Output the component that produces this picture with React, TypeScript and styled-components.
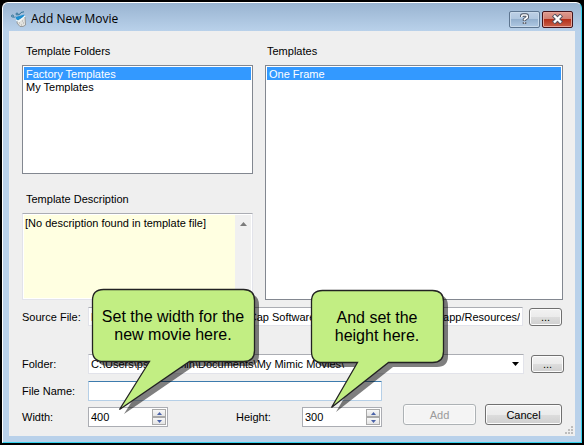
import React, { useState } from "react";
import styled, { createGlobalStyle } from "styled-components";

const GlobalStyle = createGlobalStyle`
  *, *::before, *::after { box-sizing: border-box; }
  body { margin: 0; background: #000; }
  button, input, select, textarea { font: inherit; color: inherit; margin: 0; border-radius: 0; }
  h1, h2, ul { margin: 0; padding: 0; font: inherit; }
`;

const Dialog = styled.form`
  margin: 2px;
  padding: 0 6px 6px;
  border: 1px solid #fff;
  border-right-color: #35d3ee;
  border-bottom-color: #35d3ee;
  border-radius: 6px 6px 0 0;
  background: linear-gradient(#99b4d1 0, #b9d1ea 28px, #b9d1ea 100%);
  font: 11px/14px "Liberation Sans", Arial, sans-serif;
  color: #000;
`;

const TitleBar = styled.header`
  display: flex;
  align-items: center;
  gap: 4px;
  height: 28px;
  padding: 4px 2px 0;
`;

const Title = styled.h1`
  flex: 1;
  font: 12px/16px "Open Sans", "Noto Sans", sans-serif;
`;

const CaptionButtons = styled.div`
  display: flex;
  gap: 2px;
`;

const CaptionButton = styled.button<{ $danger?: boolean }>`
  display: grid;
  place-items: center;
  width: 31px;
  height: 17px;
  padding: 0;
  border: 1px solid ${(p) => (p.$danger ? "#43141c" : "#5d7590")};
  border-radius: 2px;
  box-shadow: inset 0 0 0 1px ${(p) => (p.$danger ? "#e6a398" : "#c9daeb")};
  background: ${(p) =>
    p.$danger
      ? "linear-gradient(#dd9a8f 0, #d07f72 50%, #b5301a 50%, #c8614a 100%)"
      : "linear-gradient(#bdd0e5 0, #afc6df 50%, #94b0ce 50%, #b0c9e3 100%)"};
`;

const Client = styled.main`
  position: relative;
  padding: 13px 11px 6px 13px;
  background: #efefef;
`;

const Panels = styled.div`
  display: grid;
  grid-template-columns: 231fr 298fr;
  gap: 12px;
  padding-right: 1px;
`;

const Column = styled.section`
  display: flex;
  flex-direction: column;
`;

const Caption = styled.h2<{ $inset: number }>`
  padding-left: ${(p) => p.$inset}px;
  margin-bottom: 7px;
`;

const ListBox = styled.ul<{ $grow?: boolean }>`
  flex: ${(p) => (p.$grow ? "1" : "none")};
  height: ${(p) => (p.$grow ? "auto" : "109px")};
  padding: 1px;
  border: 1px solid #828790;
  background: #fff;
  list-style: none;
`;

const Option = styled.li<{ $selected?: boolean }>`
  height: 13px;
  padding-left: 2px;
  line-height: 14px;
  color: ${(p) => (p.$selected ? "#fff" : "#000")};
  background: ${(p) => (p.$selected ? "#3399ff" : "transparent")};
`;

const DescriptionCaption = styled.label`
  padding-left: 4px;
  margin: 18px 0 7px;
`;

const DescriptionBox = styled.div`
  display: flex;
  height: 87px;
  padding: 1px;
  border: 1px solid #e2e3ea;
  border-top-color: #abadb3;
  background: #fff;
`;

const Description = styled.textarea`
  flex: 1;
  min-width: 0;
  padding: 1px 0 0 1px;
  border: 0;
  outline: 0;
  resize: none;
  overflow: hidden;
  background: #ffffe1;
`;

const ScrollTrack = styled.div`
  display: flex;
  flex-direction: column;
  justify-content: space-between;
  align-items: center;
  width: 16px;
  padding: 7px 0 3px;
  background: #f0f0f0;
`;

const FieldRow = styled.div<{ $top: number; $end?: number }>`
  display: flex;
  align-items: center;
  margin-top: ${(p) => p.$top}px;
  padding-right: ${(p) => p.$end ?? 2}px;
`;

const FieldLabel = styled.label<{ $indent?: number }>`
  flex: none;
  width: 66px;
  margin-left: ${(p) => p.$indent ?? 0}px;
`;

const TextField = styled.input<{ $active?: boolean }>`
  flex: 1;
  min-width: 0;
  height: 19px;
  padding: 0 2px;
  border: 1px solid ${(p) => (p.$active ? "#b5cfe7" : "#e2e3ea")};
  border-top-color: ${(p) => (p.$active ? "#3d7bad" : "#abadb3")};
  border-radius: ${(p) => (p.$active ? 1 : 0)}px;
  outline: 0;
  background: #fff;
`;

const NameField = styled(TextField)`
  flex: none;
  width: 294px;
  height: 20px;
`;

const Combo = styled.div`
  display: grid;
  flex: 1;
  min-width: 0;
  align-items: center;
  & > * { grid-area: 1 / 1; }
  & > svg { justify-self: end; margin-right: 5px; pointer-events: none; }
`;

const ComboSelect = styled.select`
  appearance: none;
  width: 100%;
  height: 20px;
  padding: 0 2px;
  border: 1px solid #e2e3ea;
  border-top-color: #abadb3;
  outline: 0;
  background: #fff;
`;

const PushButton = styled.button<{ $width: number; $height: number; $gap: number }>`
  flex: none;
  width: ${(p) => p.$width}px;
  height: ${(p) => p.$height}px;
  margin-left: ${(p) => p.$gap}px;
  padding: 0;
  border: 1px solid #707070;
  border-radius: 3px;
  box-shadow: inset 0 0 0 1px #fcfcfc;
  background: linear-gradient(#f2f2f2 0, #ebebeb 50%, #dddddd 50%, #cfcfcf 100%);
  &:disabled {
    border-color: #adb2b5;
    color: #9a9a9a;
    background: #f4f4f4;
  }
`;

const Spin = styled.div`
  position: relative;
  display: flex;
  flex: none;
  width: 80px;
  height: 20px;
  padding: 1px;
  border: 1px solid #abadb3;
  background: #fff;
`;

const SpinInput = styled.input`
  flex: 1;
  min-width: 0;
  padding: 0 0 1px 1px;
  border: 0;
  outline: 0;
  background: transparent;
  appearance: textfield;
  &::-webkit-inner-spin-button { appearance: none; margin: 0; }
`;

const SpinButtons = styled.div`
  display: grid;
  width: 14px;
  grid-template-rows: 1fr 1fr;
`;

const SpinButton = styled.button`
  display: grid;
  place-items: center;
  min-height: 0;
  padding: 0;
  border: 1px solid #a9a9a9;
  background: linear-gradient(#f8f8f8, #e4e4e4);
`;

const Actions = styled.div`
  display: flex;
  flex: 1;
  justify-content: flex-end;
  margin-bottom: 5px;
`;

const Grip = styled.svg`
  position: absolute;
  right: 2px;
  bottom: 2px;
`;

const Bubble = styled.aside<{ $left: number; $bottom: number; $width: number }>`
  position: absolute;
  z-index: 1;
  left: ${(p) => p.$left}px;
  bottom: ${(p) => p.$bottom}px;
  width: ${(p) => p.$width}px;
  height: 121px;
  padding: 19px 0 0;
  font: 16px/18px "Liberation Sans", Arial, sans-serif;
  text-align: center;
  pointer-events: none;
  & > svg { position: absolute; inset: 0; overflow: visible; }
  & > p { position: relative; margin: 0; white-space: pre-line; }
`;

function Callout(props: {
  left: number;
  bottom: number;
  width: number;
  tail: [number, number, number, number];
  text: string;
}) {
  const { left, bottom, width: w, tail, text } = props;
  const [from, to, tipX, tipY] = tail;
  const h = 72;
  const r = 11;
  const d =
    `M${r} 0H${w - r}Q${w} 0 ${w} ${r}V${h - r}Q${w} ${h} ${w - r} ${h}` +
    `H${to}L${tipX} ${tipY}L${from} ${h}H${r}Q0 ${h} 0 ${h - r}V${r}Q0 0 ${r} 0Z`;
  return (
    <Bubble $left={left} $bottom={bottom} $width={w}>
      <svg width={w} height="121" aria-hidden="true">
        <path d={d} transform="translate(5 5)" fill="#000" fillOpacity="0.5" />
        <path d={d} transform="translate(.5 .5)" fill="#c2ee83" stroke="#222" strokeWidth="1.3" />
      </svg>
      <p>{text}</p>
    </Bubble>
  );
}

function Arrow({ down, color, size = 5 }: { down?: boolean; color: string; size?: number }) {
  const h = Math.ceil(size / 2);
  return (
    <svg width={size} height={h} viewBox={`0 0 ${size} ${h}`} aria-hidden="true">
      <path d={down ? `M0 0H${size}L${size / 2} ${h}Z` : `M0 ${h}H${size}L${size / 2} 0Z`} fill={color} />
    </svg>
  );
}

function Stepper(props: { id: string; initial: number; children: React.ReactNode }) {
  const [value, setValue] = useState(props.initial);
  return (
    <Spin>
      <SpinInput id={props.id} type="number" value={value} onChange={(e) => setValue(Number(e.target.value))} />
      <SpinButtons>
        <SpinButton type="button" aria-label="Increase" onClick={() => setValue(value + 1)}>
          <Arrow color="#4a62a8" />
        </SpinButton>
        <SpinButton type="button" aria-label="Decrease" onClick={() => setValue(value - 1)}>
          <Arrow down color="#4a62a8" />
        </SpinButton>
      </SpinButtons>
      {props.children}
    </Spin>
  );
}

function AppIcon() {
  return (
    <svg width="16" height="16" viewBox="0 0 16 16" aria-hidden="true">
      <path d="M6.5 9L10 6.5L14 6L14.6 14L12 15.5H9L6 12Z" fill="#e2e2de" stroke="#8a8c8c" strokeWidth=".8" />
      <path d="M4.5 6L13.5 3.5L13 6L9 8L6 10Z" fill="#1d8fd0" />
      <path d="M5 9L8 10.5L14 5" fill="none" stroke="#f4fafc" strokeWidth="1.2" />
      <path d="M8 12h1m2-2h1m-2 4h1m1-2h1" stroke="#a9a9a9" />
      <g fill="none" stroke="#2f7094">
        <circle cx="1.5" cy="5" r="1" />
        <circle cx="6" cy="3" r="1" />
        <path d="M2.5 7L4 5.5M7 4L9 3L10 1.5L13 .8" />
      </g>
    </svg>
  );
}

const SOURCE = "H:/App Program Files (x86)/MadCap Software/MadCap Mimic V7/Mimic.app/Resources/";
const FOLDER = "C:\\Users\\pschmidolin\\Documents\\My Mimic Movies\\";

export default function App() {
  return (
    <>
      <GlobalStyle />
      <Dialog onSubmit={(e) => e.preventDefault()}>
        <TitleBar>
          <AppIcon />
          <Title>Add New Movie</Title>
          <CaptionButtons>
            <CaptionButton type="button" aria-label="Help">
              <svg width="9" height="12" viewBox="0 0 9 12" fill="none" aria-hidden="true">
                <path d="M1.8 4V3Q1.8 2 3 2H6Q7.2 2 7.2 3V4.5L4.5 6.5V8M4.5 9V11" stroke="#4b5260" strokeWidth="3.4" />
                <path d="M1.8 4V3Q1.8 2 3 2H6Q7.2 2 7.2 3V4.5L4.5 6.5V7.6M4.5 9.2V10.6" stroke="#fff" strokeWidth="1.6" />
              </svg>
            </CaptionButton>
            <CaptionButton type="button" $danger aria-label="Close">
              <svg width="13" height="10" viewBox="0 0 13 10" fill="none" aria-hidden="true">
                <path d="M2.5 1L10.5 9M10.5 1L2.5 9" stroke="#53515f" strokeWidth="4.4" />
                <path d="M3 1.5L10 8.5M10 1.5L3 8.5" stroke="#fff" strokeWidth="2.4" />
              </svg>
            </CaptionButton>
          </CaptionButtons>
        </TitleBar>
        <Client>
          <Panels>
            <Column>
              <Caption id="folders" $inset={4}>Template Folders</Caption>
              <ListBox role="listbox" aria-labelledby="folders">
                <Option role="option" aria-selected $selected>Factory Templates</Option>
                <Option role="option" aria-selected={false}>My Templates</Option>
              </ListBox>
              <DescriptionCaption htmlFor="description">Template Description</DescriptionCaption>
              <DescriptionBox>
                <Description id="description" readOnly value="[No description found in template file]" />
                <ScrollTrack>
                  <Arrow color="#7b7b7b" size={7} />
                  <Arrow down color="#7b7b7b" size={7} />
                </ScrollTrack>
              </DescriptionBox>
            </Column>
            <Column>
              <Caption id="templates" $inset={2}>Templates</Caption>
              <ListBox role="listbox" aria-labelledby="templates" $grow>
                <Option role="option" aria-selected $selected>One Frame</Option>
              </ListBox>
            </Column>
          </Panels>
          <FieldRow $top={7}>
            <FieldLabel htmlFor="source">Source File:</FieldLabel>
            <TextField id="source" readOnly value={SOURCE} />
            <PushButton type="button" $width={33} $height={18} $gap={6} aria-label="Browse source file">...</PushButton>
          </FieldRow>
          <FieldRow $top={28} $end={0}>
            <FieldLabel htmlFor="folder">Folder:</FieldLabel>
            <Combo>
              <ComboSelect id="folder" defaultValue={FOLDER}>
                <option>{FOLDER}</option>
              </ComboSelect>
              <Arrow down color="#000" size={7} />
            </Combo>
            <PushButton type="button" $width={33} $height={18} $gap={7} aria-label="Browse folder">...</PushButton>
          </FieldRow>
          <FieldRow $top={7}>
            <FieldLabel htmlFor="name">File Name:</FieldLabel>
            <NameField id="name" $active />
          </FieldRow>
          <FieldRow $top={3}>
            <FieldLabel htmlFor="width">Width:</FieldLabel>
            <Stepper id="width" initial={400}>
              <Callout left={3} bottom={16} width={162} tail={[57, 97, 27, 120]} text={"Set the width for the\nnew movie here."} />
            </Stepper>
            <FieldLabel $indent={68} htmlFor="height">Height:</FieldLabel>
            <Stepper id="height" initial={300}>
              <Callout left={8} bottom={15} width={132} tail={[46, 77, 20, 117]} text={"And set the\nheight here."} />
            </Stepper>
            <Actions>
              <PushButton type="submit" disabled $width={73} $height={21} $gap={0}>Add</PushButton>
              <PushButton type="button" $width={77} $height={21} $gap={9}>Cancel</PushButton>
            </Actions>
          </FieldRow>
          <Grip width="8" height="8" viewBox="0 0 8 8" aria-hidden="true">
            <path d="M6 0h2v2h-2zM3 3h2v2h-2zM6 3h2v2h-2zM0 6h2v2h-2zM3 6h2v2h-2zM6 6h2v2h-2z" fill="#bdbdbd" />
          </Grip>
        </Client>
      </Dialog>
    </>
  );
}
